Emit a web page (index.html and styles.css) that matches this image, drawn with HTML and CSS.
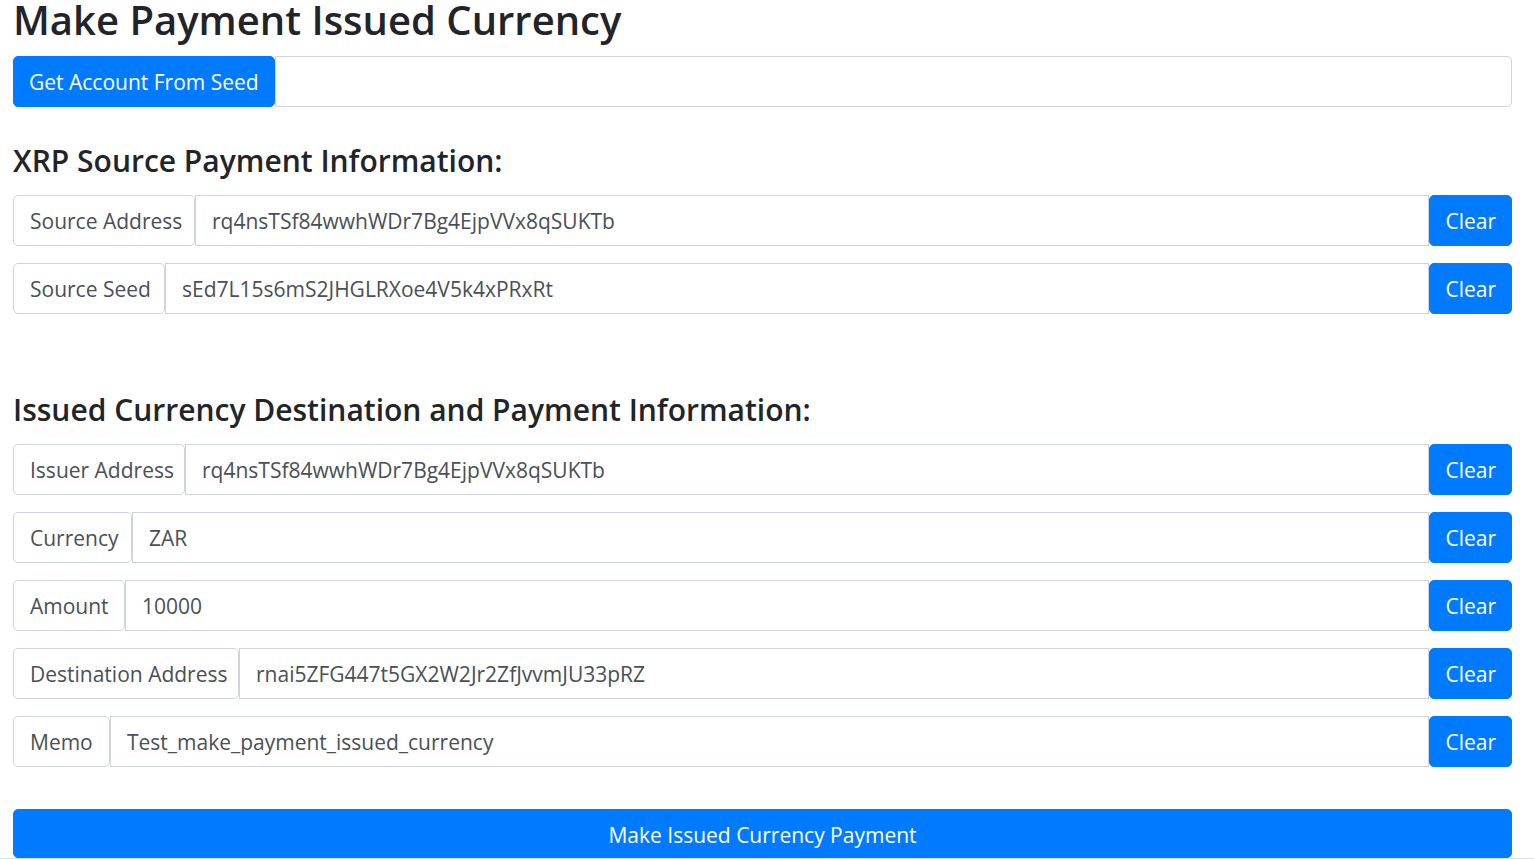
FILE: index.html
```html
<!DOCTYPE html>
<html lang="en">
<head>
<meta charset="utf-8">
<title>Make Payment Issued Currency</title>
<link rel="stylesheet" href="styles.css">
</head>
<body>
<main class="page">
  <h1 class="title">Make Payment Issued Currency</h1>
  <form class="form">
    <div class="group">
      <button class="btn" type="button">Get Account From Seed</button>
      <input class="field field-last" type="text" aria-label="Account seed">
    </div>

    <section class="section">
      <h2 class="heading">XRP Source Payment Information:</h2>
      <div class="rows">
        <div class="group">
          <label class="label label-source" for="source">Source Address</label>
          <input class="field" id="source" type="text" value="rq4nsTSf84wwhWDr7Bg4EjpVVx8qSUKTb">
          <button class="btn" type="button">Clear</button>
        </div>
        <div class="group">
          <label class="label label-seed" for="seed">Source Seed</label>
          <input class="field" id="seed" type="text" value="sEd7L15s6mS2JHGLRXoe4V5k4xPRxRt">
          <button class="btn" type="button">Clear</button>
        </div>
      </div>
    </section>

    <section class="section section-destination">
      <h2 class="heading">Issued Currency Destination and Payment Information:</h2>
      <div class="rows">
        <div class="group">
          <label class="label label-issuer" for="issuer">Issuer Address</label>
          <input class="field" id="issuer" type="text" value="rq4nsTSf84wwhWDr7Bg4EjpVVx8qSUKTb">
          <button class="btn" type="button">Clear</button>
        </div>
        <div class="group">
          <label class="label label-currency" for="currency">Currency</label>
          <input class="field" id="currency" type="text" value="ZAR">
          <button class="btn" type="button">Clear</button>
        </div>
        <div class="group">
          <label class="label label-amount" for="amount">Amount</label>
          <input class="field" id="amount" type="text" value="10000">
          <button class="btn" type="button">Clear</button>
        </div>
        <div class="group">
          <label class="label label-destination" for="destination">Destination Address</label>
          <input class="field" id="destination" type="text" value="rnai5ZFG447t5GX2W2Jr2ZfJvvmJU33pRZ">
          <button class="btn" type="button">Clear</button>
        </div>
        <div class="group">
          <label class="label label-memo" for="memo">Memo</label>
          <input class="field" id="memo" type="text" value="Test_make_payment_issued_currency">
          <button class="btn" type="button">Clear</button>
        </div>
      </div>
    </section>

    <button class="btn submit" type="submit">Make Issued Currency Payment</button>
  </form>
</main>
<hr class="rule">
</body>
</html>
```
FILE: styles.css
```css
* { box-sizing: border-box; }
body {
  margin: 0;
  background: #fff;
  color: #212529;
  font-family: "Segoe UI", "Open Sans", "Noto Sans", sans-serif;
  font-size: 21px;
  line-height: 33px;
}
.page { padding: 0 22px 0 13px; }
.title {
  margin: 0 0 16px;
  font-size: 40px;
  font-weight: 600;
  line-height: 40px;
}
.heading {
  margin: 0 0 13px;
  font-size: 30px;
  font-weight: 600;
  line-height: 42px;
}
.section { margin-top: 33px; }
.section-destination { margin-top: 75px; }
.rows { display: grid; gap: 17px; }
.rows .group { min-width: 0; }
.group { display: flex; }
.label, .field, .btn {
  font: inherit;
  padding: 9px 16px 7px;
  border: 1px solid #ced4da;
  border-radius: 5px;
}
.label {
  flex: none;
  padding-right: 8px;
  color: #495057;
  background: #fff;
  white-space: nowrap;
}
.label-source { width: 182px; }
.label-seed { width: 152px; }
.label-issuer { width: 172px; }
.label-currency { width: 119px; }
.label-amount { width: 112px; }
.label-destination { width: 226px; }
.label-memo { width: 97px; }
.field {
  flex: 1;
  min-width: 0;
  color: #495057;
  background: #fff;
  border-radius: 0;
}
.field-last { border-radius: 0 5px 5px 0; }
.btn {
  flex: none;
  padding-left: 15px;
  padding-right: 15px;
  color: #fff;
  background: #007bff;
  border-color: #007bff;
  cursor: pointer;
}
.submit {
  display: block;
  width: 100%;
  margin-top: 42px;
  padding-bottom: 5px;
}
.rule {
  margin: 0;
  border: 0;
  border-top: 1px solid #dee2e6;
}
```
